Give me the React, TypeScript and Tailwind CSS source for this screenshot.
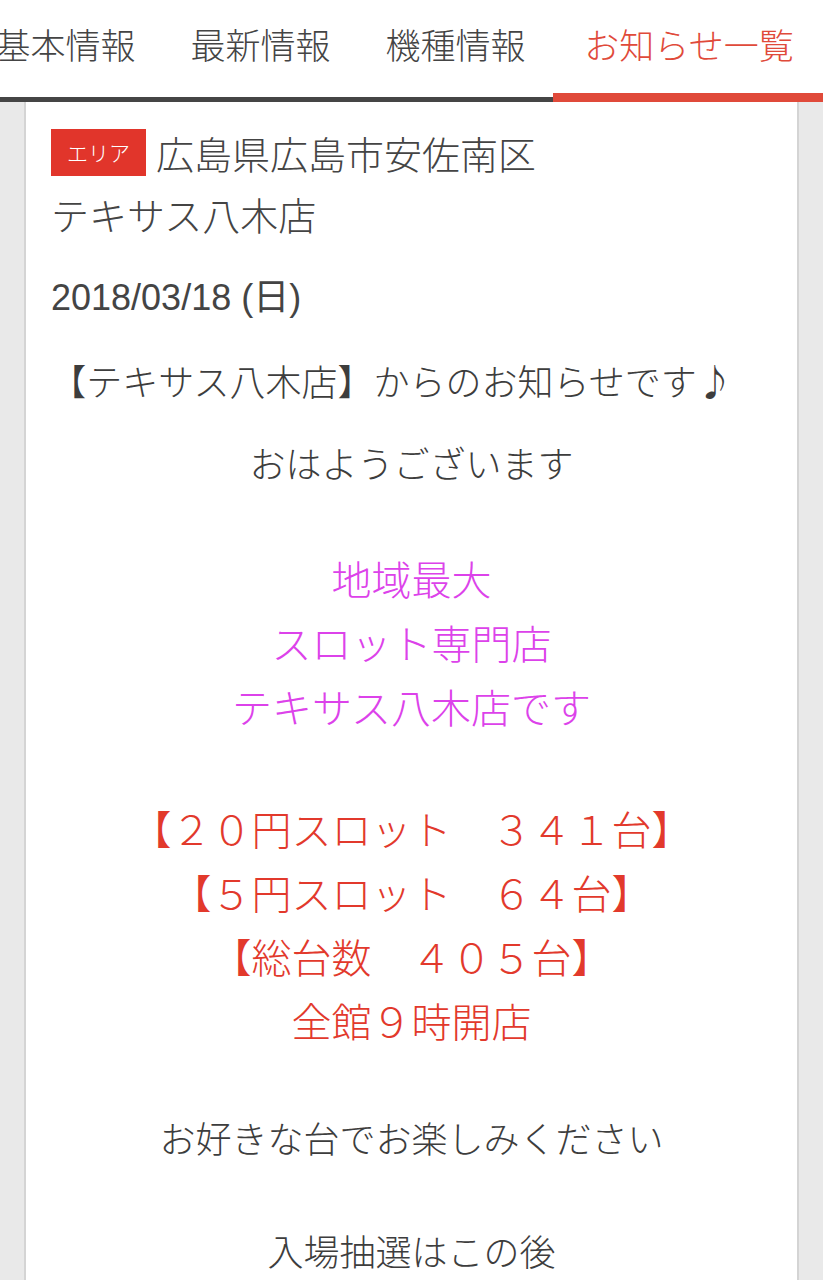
const jp = "font-['Noto_Sans_CJK_JP','Noto_Sans_CJK_SC',sans-serif]";

const tabs = [
  { label: "基本情報", active: false },
  { label: "最新情報", active: false },
  { label: "機種情報", active: false },
  { label: "お知らせ一覧", active: true },
];

const magentaLines = ["地域最大", "スロット専門店", "テキサス八木店です"];
const redLines = [
  "【２０円スロット　３４１台】",
  "【５円スロット　６４台】",
  "【総台数　４０５台】",
  "全館９時開店",
];

export default function App() {
  return (
    <div className={`min-h-screen w-[823px] overflow-hidden bg-[#e9e9e9] font-light ${jp}`}>
      {/* Tabs */}
      <div className="flex h-[102px] overflow-hidden bg-white">
        <div className="ml-[-32px] flex">
          {tabs.map((tab) => (
            <div
              key={tab.label}
              className={`flex h-[102px] shrink-0 justify-center pt-[22px] text-[35px] leading-[44px] ${
                tab.active
                  ? "w-[272px] border-b-[9px] border-[#e04a3a] text-[#e04a3a]"
                  : "w-[195px] border-b-[5px] border-[#454545] text-[#444]"
              }`}
            >
              {tab.label}
            </div>
          ))}
        </div>
      </div>

      {/* Card */}
      <div className="mx-[24px] border-x-2 border-[#d4d4d4] bg-white pt-[20px] pb-[10px]">
        <div className="pl-[25px] text-[38px] leading-[61px] text-[#444]">
          <div className="flex h-[61px] items-center">
            <span className="flex h-[47px] w-[95px] shrink-0 items-center justify-center bg-[#e1352b] text-[21px] leading-none text-white">
              エリア
            </span>
            <span className="ml-[10px]">広島県広島市安佐南区</span>
          </div>
          <div>テキサス八木店</div>
        </div>

        <div className="mt-[32px] pl-[25px] font-['Liberation_Sans','Noto_Sans_CJK_JP',sans-serif] text-[36px] font-normal leading-[44px] text-[#444]">
          2018/03/18 (日)
        </div>

        <div className="mt-[28px] pr-[40px] text-center text-[36px] leading-[64px] text-[#3d3d3d]">
          【テキサス八木店】からのお知らせです♪
        </div>
        <div className="mt-[18px] text-center text-[36px] leading-[64px] text-[#3d3d3d]">
          おはようございます
        </div>

        <div className="mt-[52px] text-center text-[40px] leading-[64px] text-[#dc42ea]">
          {magentaLines.map((l) => (
            <div key={l}>{l}</div>
          ))}
        </div>

        <div className="mt-[58px] text-center text-[40px] leading-[64px] text-[#e2392c]">
          {redLines.map((l) => (
            <div key={l}>{l}</div>
          ))}
        </div>

        <div className="mt-[53px] text-center text-[36px] leading-[64px] text-[#3d3d3d]">
          お好きな台でお楽しみください
        </div>
        <div className="mt-[49px] text-center text-[36px] leading-[64px] text-[#3d3d3d]">
          入場抽選はこの後
        </div>
      </div>
    </div>
  );
}
